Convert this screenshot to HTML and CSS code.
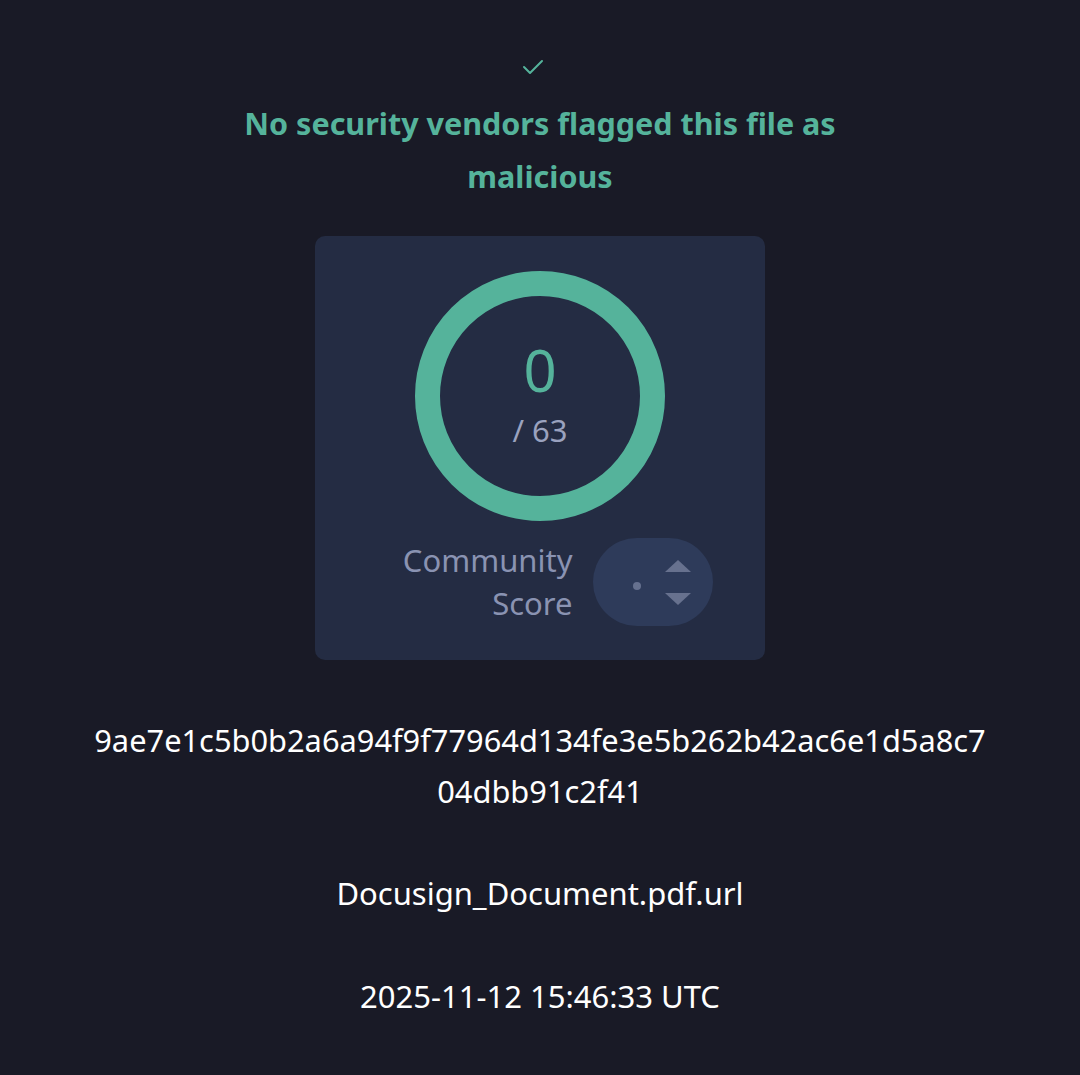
FILE: index.html
```
<!DOCTYPE html>
<html lang="en">
<head>
    <meta charset="UTF-8">
    <meta name="viewport" content="width=device-width, initial-scale=1.0">
    <title>File report</title>
    <link rel="stylesheet" href="styles.css">
</head>
<body>

<div class="report">
    <div class="verdict">
        <svg class="verdict-icon" width="24" height="18" viewBox="0 0 24 18">
            <polyline points="3,8 9,14 21,2" fill="none" stroke="#55b39b" stroke-width="2" stroke-linecap="round" stroke-linejoin="round"/>
        </svg>
        <h1 class="verdict-title">No security vendors flagged this file as malicious</h1>
    </div>

    <div class="score-card">
        <div class="ring">
            <div class="ring-value">0</div>
            <div class="ring-total">/ 63</div>
        </div>
        <div class="community">
            <div class="community-label">Community Score</div>
            <div class="vote-pill">
                <span class="vote-dot"></span>
                <span class="vote-arrows">
                    <span class="arrow-up"></span>
                    <span class="arrow-down"></span>
                </span>
            </div>
        </div>
    </div>

    <div class="file-hash">9ae7e1c5b0b2a6a94f9f77964d134fe3e5b262b42ac6e1d5a8c704dbb91c2f41</div>
    <div class="file-name">Docusign_Document.pdf.url</div>
    <div class="file-date">2025-11-12 15:46:33 UTC</div>
</div>

</body>
</html>
```

FILE: styles.css
```
:root {
    --bg: #191a26;
    --card: #242c43;
    --green: #55b39b;
    --muted: #8a93b2;
    --pill: #2e3b5a;
    --text: #ffffff;
}

* {
    box-sizing: border-box;
    margin: 0;
    padding: 0;
}

body {
    font-family: "Noto Sans", "Open Sans", sans-serif;
    background-color: var(--bg);
    color: var(--text);
}

.report {
    display: flex;
    flex-direction: column;
    align-items: center;
    padding-top: 59px;
    min-height: 100vh;
}

.verdict {
    display: flex;
    flex-direction: column;
    align-items: center;
}

.verdict-icon {
    display: block;
    margin-right: 14px;
}

.verdict-title {
    margin-top: 20px;
    width: 640px;
    color: var(--green);
    font-size: 30.5px;
    font-weight: 700;
    line-height: 53px;
    text-align: center;
}

.score-card {
    margin-top: 33px;
    width: 450px;
    height: 424px;
    background-color: var(--card);
    border-radius: 10px;
    display: flex;
    flex-direction: column;
    align-items: center;
    padding-top: 35px;
}

.ring {
    width: 250px;
    height: 250px;
    border: 25px solid var(--green);
    border-radius: 50%;
    display: flex;
    flex-direction: column;
    align-items: center;
    justify-content: center;
}

.ring-value {
    color: var(--green);
    font-size: 58px;
    font-weight: 400;
    line-height: 60px;
    margin-top: -4px;
}

.ring-total {
    margin-top: 12px;
    color: #9aa2bf;
    font-size: 31px;
    line-height: 36px;
}

.community {
    margin-top: 17px;
    display: flex;
    align-items: center;
    gap: 20px;
}

.community-label {
    width: 205px;
    text-align: right;
    color: var(--muted);
    font-size: 31px;
    line-height: 43px;
}

.vote-pill {
    width: 120px;
    height: 88px;
    border-radius: 44px;
    background-color: var(--pill);
    display: flex;
    align-items: center;
    padding-left: 40px;
    gap: 24px;
}

.vote-dot {
    width: 8px;
    height: 8px;
    border-radius: 50%;
    background-color: #66718f;
    margin-top: 8px;
}

.vote-arrows {
    display: flex;
    flex-direction: column;
    gap: 21px;
}

.arrow-up,
.arrow-down {
    width: 0;
    height: 0;
    border-left: 13px solid transparent;
    border-right: 13px solid transparent;
}

.arrow-up {
    border-bottom: 12px solid #67718e;
}

.arrow-down {
    border-top: 12px solid #67718e;
}

.file-hash {
    margin-top: 55px;
    width: 900px;
    font-size: 30.8px;
    line-height: 51px;
    text-align: center;
    word-break: break-all;
}

.file-name {
    margin-top: 51px;
    font-size: 31px;
    line-height: 51px;
}

.file-date {
    margin-top: 52px;
    font-size: 31px;
    line-height: 51px;
}
```
